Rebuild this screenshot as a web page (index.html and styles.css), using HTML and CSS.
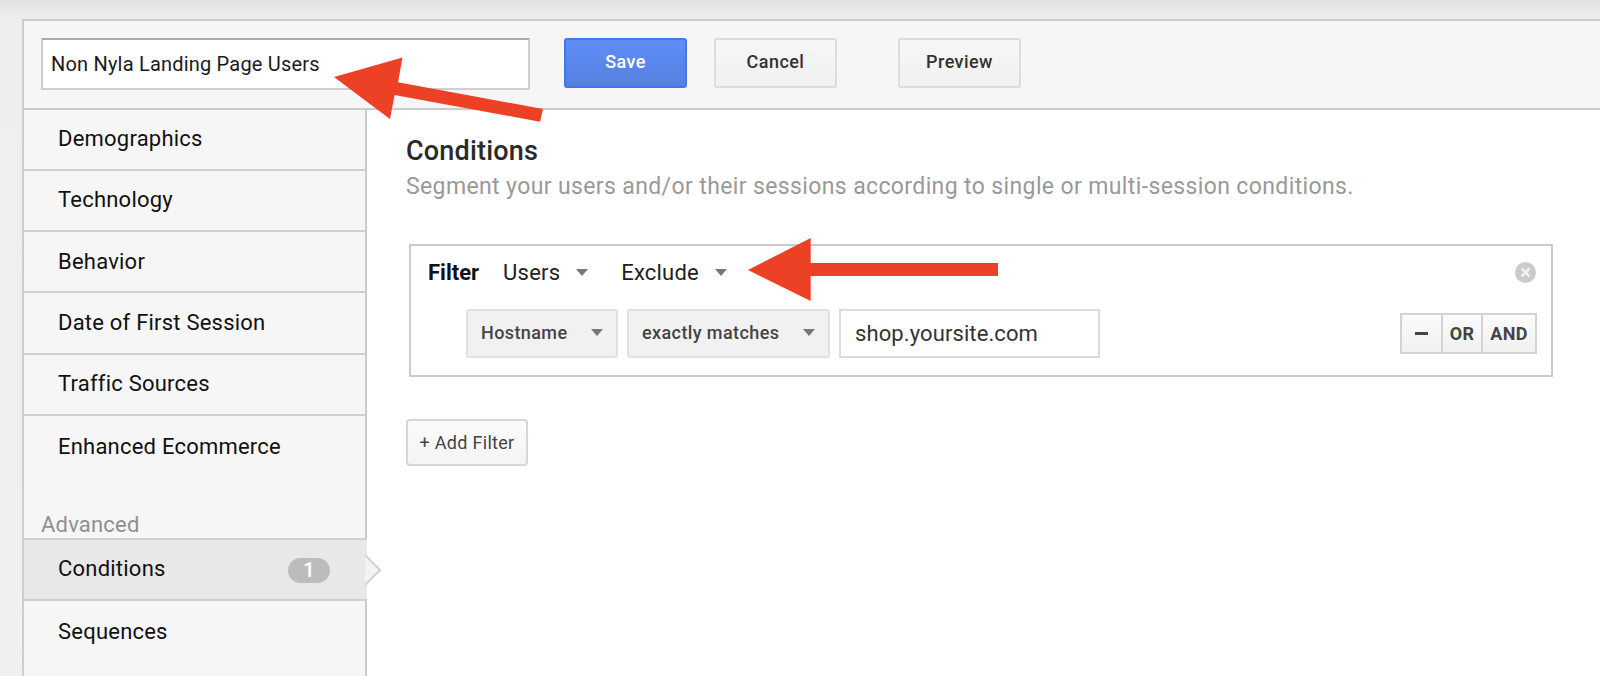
FILE: index.html
```html
<!DOCTYPE html>
<html lang="en">
<head>
<meta charset="utf-8">
<title>Segment editor</title>
<link rel="stylesheet" href="styles.css">
</head>
<body>
<div class="panel">
  <header class="toolbar">
    <div class="name-field">Non Nyla Landing Page Users</div>
    <button class="btn btn-save">Save</button>
    <button class="btn btn-cancel">Cancel</button>
    <button class="btn btn-preview">Preview</button>
  </header>
  <div class="main">
    <nav class="sidebar">
      <div class="nav-item">Demographics</div>
      <div class="nav-item">Technology</div>
      <div class="nav-item">Behavior</div>
      <div class="nav-item">Date of First Session</div>
      <div class="nav-item">Traffic Sources</div>
      <div class="nav-item nav-last">Enhanced Ecommerce</div>
      <div class="nav-label">Advanced</div>
      <div class="nav-item nav-active">Conditions<span class="badge">1</span><svg class="pointer" width="16" height="30" viewBox="0 0 16 30"><path d="M0 0L15 15L0 30" fill="#f3f3f3" stroke="#d2d2d2" stroke-width="2"/></svg></div>
      <div class="nav-item nav-last">Sequences</div>
    </nav>
    <section class="content">
      <h1 class="title">Conditions</h1>
      <p class="subtitle">Segment your users and/or their sessions according to single or multi-session conditions.</p>
      <div class="filter">
        <div class="filter-head">
          <strong class="filter-label">Filter</strong>
          <span class="drop drop-users">Users<i class="caret"></i></span>
          <span class="drop">Exclude<i class="caret"></i></span>
          <svg class="remove" width="21" height="21" viewBox="0 0 21 21"><circle cx="10.500" cy="10.500" r="10.500" fill="#cbcbcb"/><path d="M6.500 6.500l8 8M14.500 6.500l-8 8" stroke="#f2f2f2" stroke-width="2.600" fill="none"/></svg>
        </div>
        <div class="filter-row">
          <div class="select select-host">Hostname<i class="caret"></i></div>
          <div class="select select-match">exactly matches<i class="caret"></i></div>
          <div class="value">shop.yoursite.com</div>
          <div class="logic">
            <span class="logic-btn logic-minus"><i class="minus"></i></span>
            <span class="logic-btn logic-or">OR</span>
            <span class="logic-btn logic-and">AND</span>
          </div>
        </div>
      </div>
      <button class="add-filter">+ Add Filter</button>
    </section>
  </div>
</div>
<svg class="arrows" width="1600" height="676" viewBox="0 0 1600 676" aria-hidden="true">
  <path fill="#ec4124" d="M334 77L402.500 57.500L398 82.300L543 109L540 121.700L394.600 95L390 119Z"/>
  <path fill="#ec4124" d="M748 270L810.700 238V263H998V276H810.700V301Z"/>
</svg>
</body>
</html>
```
FILE: styles.css
```css
* { box-sizing: border-box; }
html, body { margin: 0; height: 676px; overflow: hidden; }
body {
  padding: 19px 0 0 22px;
  background: linear-gradient(#e2e2e2 0, #eeeeee 19px, #f0f0f0 100%);
  font-family: Roboto, "Liberation Sans", sans-serif;
  color: #222;
}
.panel {
  height: 657px;
  border-top: 2px solid #cdcdcd;
  border-left: 2px solid #cdcdcd;
  display: flex;
  flex-direction: column;
}
.toolbar {
  height: 88.500px;
  flex: none;
  display: flex;
  align-items: flex-start;
  background: #f6f6f6;
  border-bottom: 2px solid #cbcbcb;
  padding: 16px 0 0 17px;
}
.name-field {
  width: 489px;
  height: 52px;
  margin-top: 1px;
  padding: 0 0 0 8px;
  display: flex;
  align-items: center;
  background: #fff;
  border: 2px solid #cfcfcf;
  border-top-color: #a9a9a9;
  font-size: 20px;
  letter-spacing: 0.2px;
  color: #1a1a1a;
}
.btn {
  width: 123px;
  height: 50px;
  margin-top: 0.500px;
  padding: 0 0 2px;
  border-radius: 3px;
  font-family: inherit;
  font-size: 18px;
  font-weight: 500;
  letter-spacing: 0.45px;
  color: #333;
  background: linear-gradient(#f6f6f6, #f1f1f1);
  border: 2px solid #dcdcdc;
}
.btn-save {
  margin-left: 34px;
  color: #fff;
  background: linear-gradient(#608ef6, #5580e0);
  border-color: #3f78ee;
}
.btn-cancel { margin-left: 27px; }
.btn-preview { margin-left: 61px; }
.main { flex: 1; display: flex; min-height: 0; }
.sidebar {
  width: 343px;
  flex: none;
  background: #f6f6f6;
  border-right: 2px solid #cbcbcb;
}
.nav-item {
  position: relative;
  height: 61.300px;
  padding: 0 0 1px 34px;
  display: flex;
  align-items: center;
  border-bottom: 2px solid #cfcfcf;
  font-size: 22px;
  letter-spacing: 0.22px;
  color: #111;
}
.nav-last { border-bottom: none; }
.nav-label {
  height: 61.500px;
  padding: 31px 0 0 17px;
  font-size: 22px;
  line-height: 31px;
  letter-spacing: 0.2px;
  color: #8f8f8f;
  border-bottom: 2px solid #cfcfcf;
  margin-top: 1px;
}
.nav-active { background: #e8e8e8; margin-right: -2px; }
.badge {
  position: absolute;
  left: 264px;
  top: 18px;
  width: 42px;
  height: 25px;
  border-radius: 13px;
  background: #bcbcbc;
  color: #fff;
  font-size: 21px;
  font-weight: 500;
  line-height: 25px;
  text-align: center;
}
.pointer {
  position: absolute;
  left: 341px;
  top: 15px;
}
.content { flex: 1; background: #fff; padding: 0 47px 0 39px; min-width: 0; }
.title {
  margin: 25px 0 0;
  font-size: 27px;
  line-height: 32px;
  font-weight: 500;
  letter-spacing: 0.2px;
  color: #2a2a2a;
}
.subtitle {
  margin: 5px 0 0;
  font-size: 23px;
  line-height: 30px;
  letter-spacing: 0.375px;
  color: #999;
}
.filter {
  margin: 42.500px 0 0 3px;
  height: 133px;
  border: 2px solid #cbcbcb;
  padding: 0 14px 0 17px;
}
.filter-head { height: 53px; display: flex; align-items: center; font-size: 22px; color: #222; }
.filter-label { font-weight: 700; font-size: 22px; margin-right: 24px; color: #111; }
.drop { display: inline-flex; align-items: center; letter-spacing: 0.2px; }
.drop-users { margin-right: 33px; }
.caret {
  width: 0;
  height: 0;
  margin-left: 16px;
  border-left: 6.500px solid transparent;
  border-right: 6.500px solid transparent;
  border-top: 7px solid #777;
}
.remove { margin-left: auto; margin-right: 1px; }
.filter-row { display: flex; align-items: center; margin: 10px 0 0 38px; }
.select {
  height: 49px;
  display: flex;
  align-items: center;
  justify-content: space-between;
  padding: 0 13px 3px 13px;
  background: #f1f1f1;
  border: 2px solid #e0e0e0;
  border-radius: 3px;
  font-size: 18px;
  font-weight: 500;
  letter-spacing: 0.4px;
  color: #444;
  margin-right: 9px;
}
.select-host { width: 152px; }
.select-match { width: 203px; }
.value {
  width: 261px;
  height: 49px;
  padding: 0 0 0 14px;
  display: flex;
  align-items: center;
  border: 2px solid #dcdcdc;
  font-size: 22px;
  letter-spacing: 0.1px;
  color: #333;
}
.logic {
  margin-left: auto;
  display: flex;
  height: 41px;
  border: 2px solid #d3d3d3;
  background: linear-gradient(#fbfbfb, #f1f1f1);
}
.logic-btn {
  display: flex;
  align-items: center;
  justify-content: center;
  font-size: 18px;
  font-weight: 700;
  letter-spacing: 0.3px;
  color: #444;
  border-right: 2px solid #d3d3d3;
}
.logic-minus { width: 41px; }
.logic-or { width: 40px; }
.logic-and { width: 52px; border-right: 0; }
.minus { width: 13px; height: 3px; background: #444; }
.add-filter {
  display: block;
  width: 122px;
  height: 47px;
  margin-top: 42px;
  padding: 0 0 1px;
  border: 2px solid #d6d6d6;
  border-radius: 4px;
  background: linear-gradient(#fbfbfb, #f4f4f4);
  font-family: inherit;
  font-size: 18px;
  letter-spacing: 0.3px;
  color: #444;
}
.arrows { position: absolute; left: 0; top: 0; pointer-events: none; }
```
